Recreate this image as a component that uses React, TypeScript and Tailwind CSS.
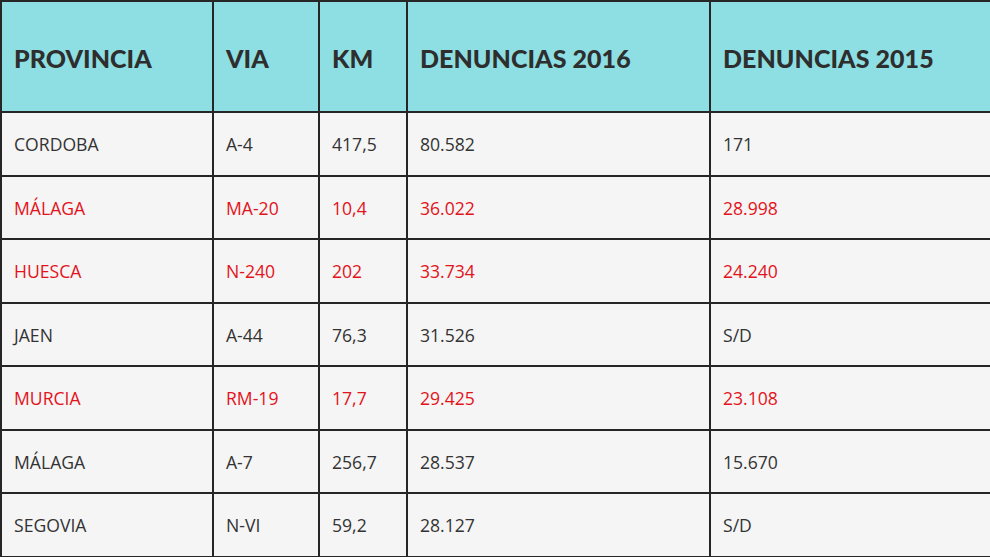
import React from "react";

const rows = [
  { p: "CORDOBA", v: "A-4", k: "417,5", d16: "80.582", d15: "171", red: false },
  { p: "MÁLAGA", v: "MA-20", k: "10,4", d16: "36.022", d15: "28.998", red: true },
  { p: "HUESCA", v: "N-240", k: "202", d16: "33.734", d15: "24.240", red: true },
  { p: "JAEN", v: "A-44", k: "76,3", d16: "31.526", d15: "S/D", red: false },
  { p: "MURCIA", v: "RM-19", k: "17,7", d16: "29.425", d15: "23.108", red: true },
  { p: "MÁLAGA", v: "A-7", k: "256,7", d16: "28.537", d15: "15.670", red: false },
  { p: "SEGOVIA", v: "N-VI", k: "59,2", d16: "28.127", d15: "S/D", red: false },
];

const headers = ["PROVINCIA", "VIA", "KM", "DENUNCIAS 2016", "DENUNCIAS 2015"];

export default function App() {
  return (
    <div className="w-[990px] h-[557px] overflow-hidden bg-[#f5f5f5]">
      <div className="grid grid-cols-[212px_106px_88px_303px_1fr] grid-rows-[111px_64px_63px_64px_63px_64px_63px_64px] border-t-2 border-l-2 border-[#262626]">
        {headers.map((h, i) => (
          <div
            key={h}
            className={
              "bg-[#8ddfe3] border-b-2 border-[#262626] flex items-center pl-[12px] pt-[4px] text-[#2e2e2e] text-[25px] font-black tracking-[0.05px] font-['Lato',sans-serif] " +
              (i < 4 ? "border-r-2" : "")
            }
          >
            {h}
          </div>
        ))}
        {rows.map((r, ri) =>
          [r.p, r.v, r.k, r.d16, r.d15].map((c, ci) => (
            <div
              key={ri + "-" + ci}
              className={
                "border-b-2 border-[#262626] flex items-center pl-[12px] pt-[1px] text-[17.6px] font-['Open_Sans',sans-serif] " +
                (ci < 4 ? "border-r-2 " : "") +
                (r.red ? "text-[#e3131b]" : "text-[#333]")
              }
            >
              {c}
            </div>
          ))
        )}
      </div>
    </div>
  );
}
